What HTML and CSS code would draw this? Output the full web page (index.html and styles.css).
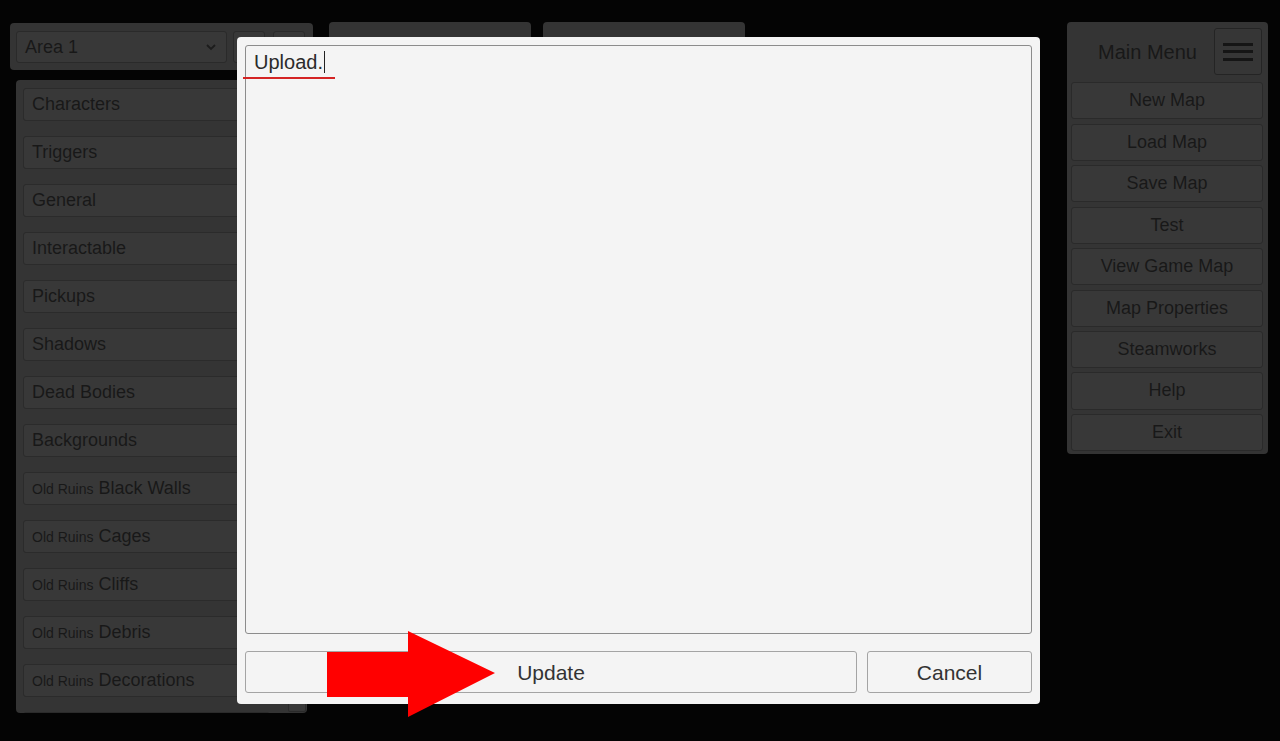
FILE: index.html
```html
<!DOCTYPE html>
<html>
<head>
<meta charset="utf-8">
<link rel="stylesheet" href="styles.css">
</head>
<body>
<div class="app">
  <div class="left-col">
    <div class="panel top-bar">
      <div class="dropdown"><span>Area 1</span>
        <svg class="chev" width="12" height="8" viewBox="0 0 12 8"><path d="M2 2 L6 6 L10 2" fill="none" stroke="#1c1c1c" stroke-width="1.8"/></svg>
      </div>
      <div class="sq-btn"></div>
      <div class="sq-btn"></div>
    </div>
    <div class="panel list-panel">
      <div class="list">
        <div class="item">Characters</div>
        <div class="item">Triggers</div>
        <div class="item">General</div>
        <div class="item">Interactable</div>
        <div class="item">Pickups</div>
        <div class="item">Shadows</div>
        <div class="item">Dead Bodies</div>
        <div class="item">Backgrounds</div>
        <div class="item"><small>Old Ruins</small> Black Walls</div>
        <div class="item"><small>Old Ruins</small> Cages</div>
        <div class="item"><small>Old Ruins</small> Cliffs</div>
        <div class="item"><small>Old Ruins</small> Debris</div>
        <div class="item"><small>Old Ruins</small> Decorations</div>
        <div class="item"></div>
      </div>
      <div class="scrollbar"><div class="thumb"></div></div>
    </div>
  </div>
  <div class="mid-panel panel"></div>
  <div class="mid-panel panel"></div>
  <div class="spacer"></div>
  <div class="panel main-menu">
    <div class="menu-head">
      <div class="menu-title">Main Menu</div>
      <div class="burger"><span></span><span></span><span></span></div>
    </div>
    <div class="menu-btn">New Map</div>
    <div class="menu-btn">Load Map</div>
    <div class="menu-btn">Save Map</div>
    <div class="menu-btn">Test</div>
    <div class="menu-btn">View Game Map</div>
    <div class="menu-btn">Map Properties</div>
    <div class="menu-btn">Steamworks</div>
    <div class="menu-btn">Help</div>
    <div class="menu-btn">Exit</div>
  </div>
</div>

<div class="modal">
  <div class="textarea">
    <span class="typed">Upload.</span><span class="caret"></span>
    <div class="underline"></div>
  </div>
  <div class="actions">
    <div class="mbtn update">Update</div>
    <div class="mbtn cancel">Cancel</div>
  </div>
</div>

<svg class="arrow" width="170" height="88" viewBox="0 0 170 88">
  <polygon points="0,21 81,21 81,0 168,42 81,86 81,66 0,66" fill="#ff0000"/>
</svg>
</body>
</html>
```

FILE: styles.css
```css
* { box-sizing: border-box; }
html, body { margin: 0; padding: 0; }
body {
  width: 1280px;
  height: 741px;
  overflow: hidden;
  background: #040404;
  font-family: "Liberation Sans", Arial, sans-serif;
  color: #181818;
  position: relative;
}
.app {
  display: flex;
  align-items: flex-start;
  padding: 22px 12px 0 10px;
  height: 741px;
}
.panel {
  background: #343434;
  border-radius: 4px;
}
.left-col {
  width: 303px;
  display: flex;
  flex-direction: column;
}
.top-bar {
  margin-top: 1px;
  height: 47px;
  display: flex;
  align-items: center;
  padding: 0 8px 0 6px;
  gap: 6px;
}
.dropdown {
  width: 211px;
  height: 32px;
  background: #383838;
  border: 1px solid #2a2a2a;
  border-radius: 3px;
  display: flex;
  align-items: center;
  justify-content: space-between;
  padding: 1px 9px 0 8px;
  font-size: 18px;
}
.sq-btn {
  width: 32px;
  height: 32px;
  background: #383838;
  border: 1px solid #2a2a2a;
  border-radius: 3px;
}
.sq-btn + .sq-btn { margin-left: 2px; }
.list-panel {
  margin: 10px 6px 0 6px;
  height: 633px;
  overflow: hidden;
  display: flex;
  padding: 8px 1px 0 7px;
}
.list {
  width: 247px;
  display: flex;
  flex-direction: column;
  gap: 15px;
}
.item {
  flex: none;
  height: 33px;
  background: #383838;
  border: 1px solid #2b2b2b;
  border-radius: 3px;
  font-size: 18px;
  line-height: 31px;
  padding-left: 8px;
  white-space: nowrap;
}
.item small { font-size: 14px; }
.scrollbar {
  margin-left: 18px;
  width: 18px;
  align-self: stretch;
  display: flex;
  flex-direction: column;
  justify-content: flex-end;
  padding-bottom: 1px;
}
.thumb {
  height: 20px;
  background: #383838;
  border: 1px solid #2a2a2a;
  border-radius: 2px;
}
.mid-panel {
  width: 202px;
  height: 60px;
  margin-left: 16px;
}
.mid-panel + .mid-panel { margin-left: 12px; }
.spacer { flex: 1; }
.main-menu {
  width: 201px;
  padding: 6px 5px 3px 4px;
  display: flex;
  flex-direction: column;
  gap: 4.1px;
}
.menu-head {
  display: flex;
  align-items: center;
  height: 47px;
  margin-bottom: 3px;
}
.menu-title {
  flex: 1;
  text-align: center;
  font-size: 20px;
  padding-left: 10px;
  padding-top: 2px;
}
.burger {
  width: 48px;
  height: 47px;
  border: 1px solid #242424;
  border-radius: 3px;
  background: #363636;
  display: flex;
  flex-direction: column;
  justify-content: center;
  align-items: center;
  gap: 4.5px;
  margin-right: 1px;
}
.burger span {
  display: block;
  width: 30px;
  height: 3px;
  background: #151515;
}
.menu-btn {
  height: 37.4px;
  background: #383838;
  border: 1px solid #2a2a2a;
  border-radius: 3px;
  text-align: center;
  font-size: 18px;
  line-height: 35.5px;
}
.modal {
  position: absolute;
  left: 237px;
  top: 37px;
  width: 803px;
  height: 667px;
  background: #f4f4f4;
  border-radius: 4px;
  padding: 8px 8px 11px 8px;
  display: flex;
  flex-direction: column;
}
.textarea {
  height: 589px;
  border: 1px solid #8c8c8c;
  border-radius: 3px;
  background: #f4f4f4;
  position: relative;
  padding: 3px 0 0 8px;
  font-size: 20px;
  color: #2b2b2b;
  line-height: 26px;
}
.caret {
  display: inline-block;
  width: 1px;
  height: 22px;
  background: #222;
  vertical-align: -4px;
  margin-left: 1px;
}
.underline {
  position: absolute;
  left: -3px;
  top: 31px;
  width: 92px;
  height: 2px;
  background: #d42424;
}
.actions {
  margin-top: 17px;
  display: flex;
  gap: 10px;
  height: 42px;
}
.mbtn {
  border: 1px solid #a4a4a4;
  border-radius: 3px;
  background: #f4f4f4;
  font-size: 21px;
  color: #333;
  display: flex;
  align-items: center;
  justify-content: center;
  padding-top: 2px;
}
.update { flex: 1; }
.cancel { width: 165px; }
.arrow {
  position: absolute;
  left: 327px;
  top: 631px;
}
```
